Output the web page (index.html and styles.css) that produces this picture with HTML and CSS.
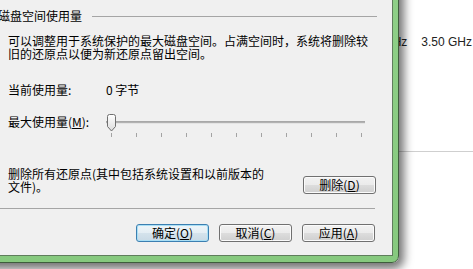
FILE: index.html
```html
<!DOCTYPE html>
<html lang="zh-CN">
<head>
<meta charset="utf-8">
<title>系统保护</title>
<link rel="stylesheet" href="styles.css">
</head>
<body>
<div class="desk">
  <div class="bgwin">
    <div class="freq"><span>Hz</span><span>3.50 GHz</span></div>
    <div class="bgline"></div>
  </div>
  <div class="dialog">
    <div class="client">
      <div class="heading"><span>磁盘空间使用量</span><i class="rule"></i></div>
      <p class="desc">可以调整用于系统保护的最大磁盘空间。占满空间时，系统将删除较旧的还原点以便为新还原点留出空间。</p>
      <div class="usage">
        <span class="lbl">当前使用量:</span><span class="val">0 字节</span>
        <span class="lbl max">最大使用量(<u>M</u>):</span>
        <div class="slider">
          <div class="track"></div>
          <div class="ticks"><i></i><i></i><i></i><i></i><i></i><i></i><i></i><i></i><i></i><i></i><i></i></div>
          <svg class="thumb" width="11" height="18" viewBox="0 0 11 18">
            <defs>
              <linearGradient id="tg" x1="0" y1="0" x2="0" y2="1">
                <stop offset="0" stop-color="#ffffff"/>
                <stop offset="1" stop-color="#dcdcdc"/>
              </linearGradient>
            </defs>
            <path d="M1.5 2.5 Q1.5 0.5 3.5 0.5 H7.5 Q9.5 0.5 9.5 2.5 V12.5 L5.5 17 L1.5 12.5 Z" fill="url(#tg)" stroke="#6f6f6f" stroke-width="1"/>
          </svg>
        </div>
      </div>
      <div class="delete-row">
        <p class="del-text">删除所有还原点(其中包括系统设置和以前版本的文件)。</p>
        <button class="btn">删除(<u>D</u>)</button>
      </div>
      <div class="sep"></div>
      <div class="actions">
        <button class="btn default">确定(<u>O</u>)</button>
        <button class="btn">取消(<u>C</u>)</button>
        <button class="btn">应用(<u>A</u>)</button>
      </div>
    </div>
  </div>
</div>
</body>
</html>
```
FILE: styles.css
```css
* { box-sizing: border-box; }
html, body { margin: 0; padding: 0; background: #ffffff; }
.desk {
  position: relative;
  width: 473px;
  height: 269px;
  overflow: hidden;
  font-family: "Noto Sans CJK SC", sans-serif;
  font-size: 12px;
  color: #000;
}
.bgwin {
  padding-top: 35px;
  font-family: "Liberation Sans", Arial, sans-serif;
  color: #222;
}
.freq {
  display: flex;
  justify-content: flex-end;
  gap: 14px;
  padding-right: 1px;
  line-height: 14px;
}
.bgline {
  margin-top: 102px;
  height: 1px;
  background: #cfcfcf;
}
.dialog {
  position: absolute;
  left: -30px;
  top: -30px;
  width: 429px;
  height: 293px;
  border: 1px solid #3f5d3d;
  border-radius: 7px;
  padding: 5px 5px 6px 5px;
  background: linear-gradient(#8fd088, #86c97e);
  box-shadow: 2px 3px 10px 3px rgba(0, 0, 0, 0.55);
}
.client {
  height: 100%;
  border: 1px solid #5f7d5c;
  background: #f0f0f0;
  padding: 32px 16px 0 21px;
  display: flex;
  flex-direction: column;
}
.heading {
  display: flex;
  gap: 10px;
  height: 14px;
  line-height: 14px;
}
.rule {
  flex: 1;
  height: 1px;
  margin-top: 7px;
  margin-right: -1px;
  background: #a5a5a5;
}
.desc {
  margin: 11px 0 0 10px;
  line-height: 13px;
}
.usage {
  margin: 23px 0 0 10px;
  display: grid;
  grid-template-columns: 98px 260px;
  row-gap: 18px;
  align-items: start;
  line-height: 13px;
}
.lbl.max { margin-top: 1px; }
.slider {
  position: relative;
  width: 260px;
  height: 24px;
}
.track {
  position: absolute;
  left: 0;
  right: 1px;
  top: 7px;
  height: 3px;
  background: #b2b2b2;
  border-bottom: 1px solid #e4e4e4;
  border-top: 1px solid #a8a8a8;
}
.ticks {
  position: absolute;
  left: 5px;
  top: 19px;
  width: 251px;
  height: 5px;
  display: flex;
  justify-content: space-between;
}
.ticks i {
  width: 1px;
  height: 4px;
  background: #a3a3a3;
}
.thumb {
  position: absolute;
  left: 0;
  top: 0;
  display: block;
}
.delete-row {
  margin: 29px 0 0 10px;
  display: flex;
  justify-content: space-between;
  align-items: flex-start;
}
.del-text {
  margin: 0;
  width: 260px;
  line-height: 13px;
}
.btn {
  width: 73px;
  height: 18px;
  padding: 0;
  font-family: "Noto Sans CJK SC", sans-serif;
  font-size: 12px;
  line-height: 16px;
  color: #000;
  border: 1px solid #707070;
  border-radius: 3px;
  background: linear-gradient(#f2f2f2 0%, #ebebeb 50%, #dddddd 50%, #cfcfcf 100%);
  box-shadow: inset 0 0 0 1px #fbfbfb;
}
.delete-row .btn { margin-top: 9px; }
.btn.default {
  border-color: #3c7fb1;
  box-shadow: inset 0 0 0 1px #a9dff5;
  background: linear-gradient(#eef5f9 0%, #e4eef4 50%, #d5e3ec 50%, #c9dae6 100%);
}
.btn u { text-decoration: underline; }
.sep {
  margin: 14px 1px 0 0;
  height: 1px;
  background: #a5a5a5;
}
.actions {
  margin: 15px 1px 0 0;
  display: flex;
  justify-content: flex-end;
  gap: 10px;
}
```
